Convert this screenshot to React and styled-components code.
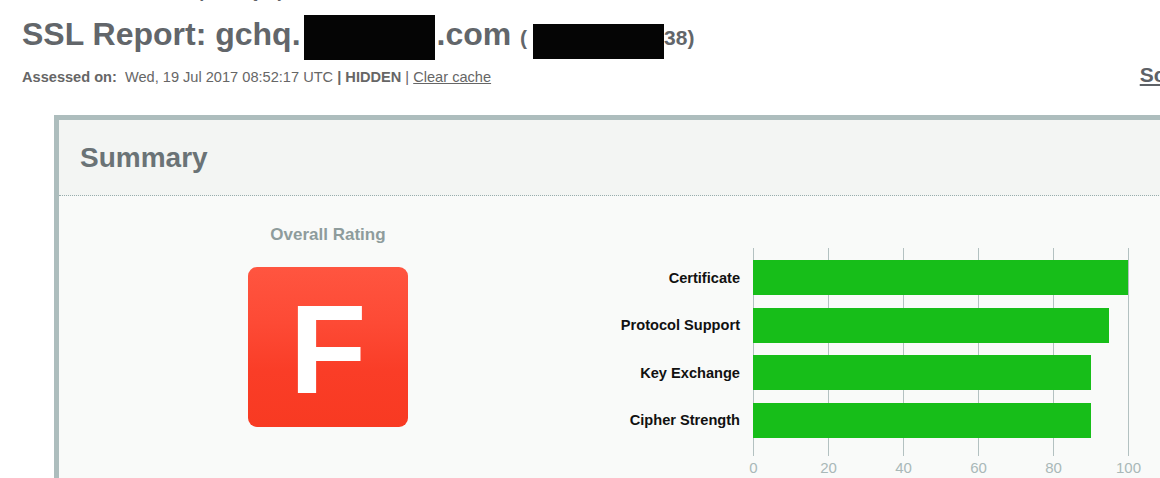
import React from "react";
import styled, { createGlobalStyle } from "styled-components";

const Global = createGlobalStyle`
  html, body { margin: 0; padding: 0; background: #ffffff; overflow: hidden; }
  body { font-family: "Liberation Sans", Arial, sans-serif; }
`;

const Page = styled.div`
  width: 1315px;
  box-sizing: border-box;
  padding: 0 22px;
`;

const Nav = styled.nav`
  display: flex;
  gap: 18px;
  margin-top: -13px;
  padding-left: 103px;
  height: 15px;
  font-size: 13px;
  font-weight: bold;
  line-height: 14px;
  overflow: hidden;
`;

const NavLink = styled.a`
  color: #5d6166;
  text-decoration: underline;
`;

const Title = styled.h1`
  margin: 0;
  padding-top: 13px;
  font-size: 32px;
  line-height: 38px;
  font-weight: bold;
  color: #62666a;
  white-space: nowrap;
`;

const Redacted = styled.span`
  display: inline-block;
  width: ${(p) => p.$w}px;
  height: ${(p) => p.$h}px;
  background: #050505;
  vertical-align: ${(p) => p.$drop}px;
  margin: 0 ${(p) => p.$mr || 0}px 0 ${(p) => p.$ml || 0}px;
`;

const Ip = styled.span`
  font-size: 21px;
`;

const InfoRow = styled.div`
  display: flex;
  align-items: baseline;
  justify-content: space-between;
  margin-top: 3px;
`;

const Assessed = styled.div`
  font-size: 14.6px;
  line-height: 18px;
  color: #666;
  white-space: nowrap;
`;

const Strong = styled.b`
  font-weight: bold;
  margin-right: ${(p) => p.$mr || 0}px;
`;

const Plain = styled.a`
  color: #666;
  text-decoration: underline;
`;

const ScanLink = styled.a`
  font-size: 21px;
  font-weight: bold;
  color: #5d6166;
  text-decoration: underline;
  white-space: nowrap;
`;

const SummaryBox = styled.section`
  margin: 28px 0 0 32px;
  width: 1300px;
  border: 5px solid #adbdbd;
  border-bottom: none;
  background: #f9faf9;
`;

const SummaryHeader = styled.div`
  height: 75px;
  display: flex;
  align-items: center;
  padding-left: 21px;
  background: #f3f5f3;
  border-bottom: 1px dotted #98adad;
  font-size: 28px;
  font-weight: bold;
  color: #6a7376;
`;

const SummaryBody = styled.div`
  display: flex;
  height: 290px;
`;

const RatingCol = styled.div`
  width: 538px;
  display: flex;
  flex-direction: column;
  align-items: center;
  padding-top: 29px;
`;

const RatingTitle = styled.div`
  font-size: 17px;
  line-height: 20px;
  font-weight: bold;
  color: #8e9c9c;
`;

const Grade = styled.div`
  margin-top: 22px;
  width: 160px;
  height: 160px;
  border-radius: 9px;
  background: linear-gradient(#ff5540 0%, #fd4a35 35%, #fa3d27 65%, #f83a22 100%);
  display: flex;
  align-items: center;
  justify-content: center;
  color: #ffffff;
  font-size: 126px;
  font-weight: bold;
  line-height: 1;
  padding-top: 6px;
  box-sizing: border-box;
`;

const Chart = styled.div`
  padding-top: 52px;
  display: grid;
  grid-template-columns: 143px 376px;
  grid-template-rows: auto auto;
  column-gap: 13px;
`;

const LabelCol = styled.div`
  display: flex;
  flex-direction: column;
  gap: 12.5px;
  padding-top: 12px;
`;

const RowLabel = styled.div`
  height: 35px;
  display: flex;
  align-items: center;
  justify-content: flex-end;
  font-size: 14.6px;
  font-weight: bold;
  color: #111;
  white-space: nowrap;
`;

const Plot = styled.div`
  display: flex;
  flex-direction: column;
  gap: 12.5px;
  padding: 12px 0 10px;
  background-image: repeating-linear-gradient(
    to right,
    #b3c1c1 0px,
    #b3c1c1 1px,
    transparent 1px,
    transparent 75px
  );
`;

const Bar = styled.div`
  height: 35px;
  background: #17be19;
`;

const Axis = styled.div`
  grid-column: 2;
  display: grid;
  grid-template-columns: repeat(6, 75px);
  margin-left: -37px;
  margin-top: 3px;
`;

const Tick = styled.div`
  text-align: center;
  font-size: 15px;
  line-height: 18px;
  color: #a9b8b8;
`;

const rows = [
  { label: "Certificate", value: 100 },
  { label: "Protocol Support", value: 95 },
  { label: "Key Exchange", value: 90 },
  { label: "Cipher Strength", value: 90 },
];

export default function App() {
  return (
    <>
      <Global />
      <Page>
        <Nav>
          <NavLink>Home</NavLink>
          <NavLink>Projects</NavLink>
          <NavLink>Qualys Free Trial</NavLink>
        </Nav>
        <Title>
          SSL Report: gchq.
          <Redacted $w={131} $h={45} $drop={-15} $ml={3} $mr={2} />
          .com{" "}
          <Ip>
            (<Redacted $w={131} $h={35} $drop={-14} $ml={6} />
            38)
          </Ip>
        </Title>
        <InfoRow>
          <Assessed>
            <Strong $mr={8}>Assessed on:</Strong>Wed, 19 Jul 2017 08:52:17 UTC{" "}
            <Strong>| HIDDEN</Strong> | <Plain>Clear cache</Plain>
          </Assessed>
          <ScanLink>Scan Another »</ScanLink>
        </InfoRow>
        <SummaryBox>
          <SummaryHeader>Summary</SummaryHeader>
          <SummaryBody>
            <RatingCol>
              <RatingTitle>Overall Rating</RatingTitle>
              <Grade>F</Grade>
            </RatingCol>
            <Chart>
              <LabelCol>
                {rows.map((r) => (
                  <RowLabel key={r.label}>{r.label}</RowLabel>
                ))}
              </LabelCol>
              <Plot>
                {rows.map((r) => (
                  <Bar key={r.label} style={{ width: `${r.value * 3.75}px` }} />
                ))}
              </Plot>
              <Axis>
                {[0, 20, 40, 60, 80, 100].map((t) => (
                  <Tick key={t}>{t}</Tick>
                ))}
              </Axis>
            </Chart>
          </SummaryBody>
        </SummaryBox>
      </Page>
    </>
  );
}
